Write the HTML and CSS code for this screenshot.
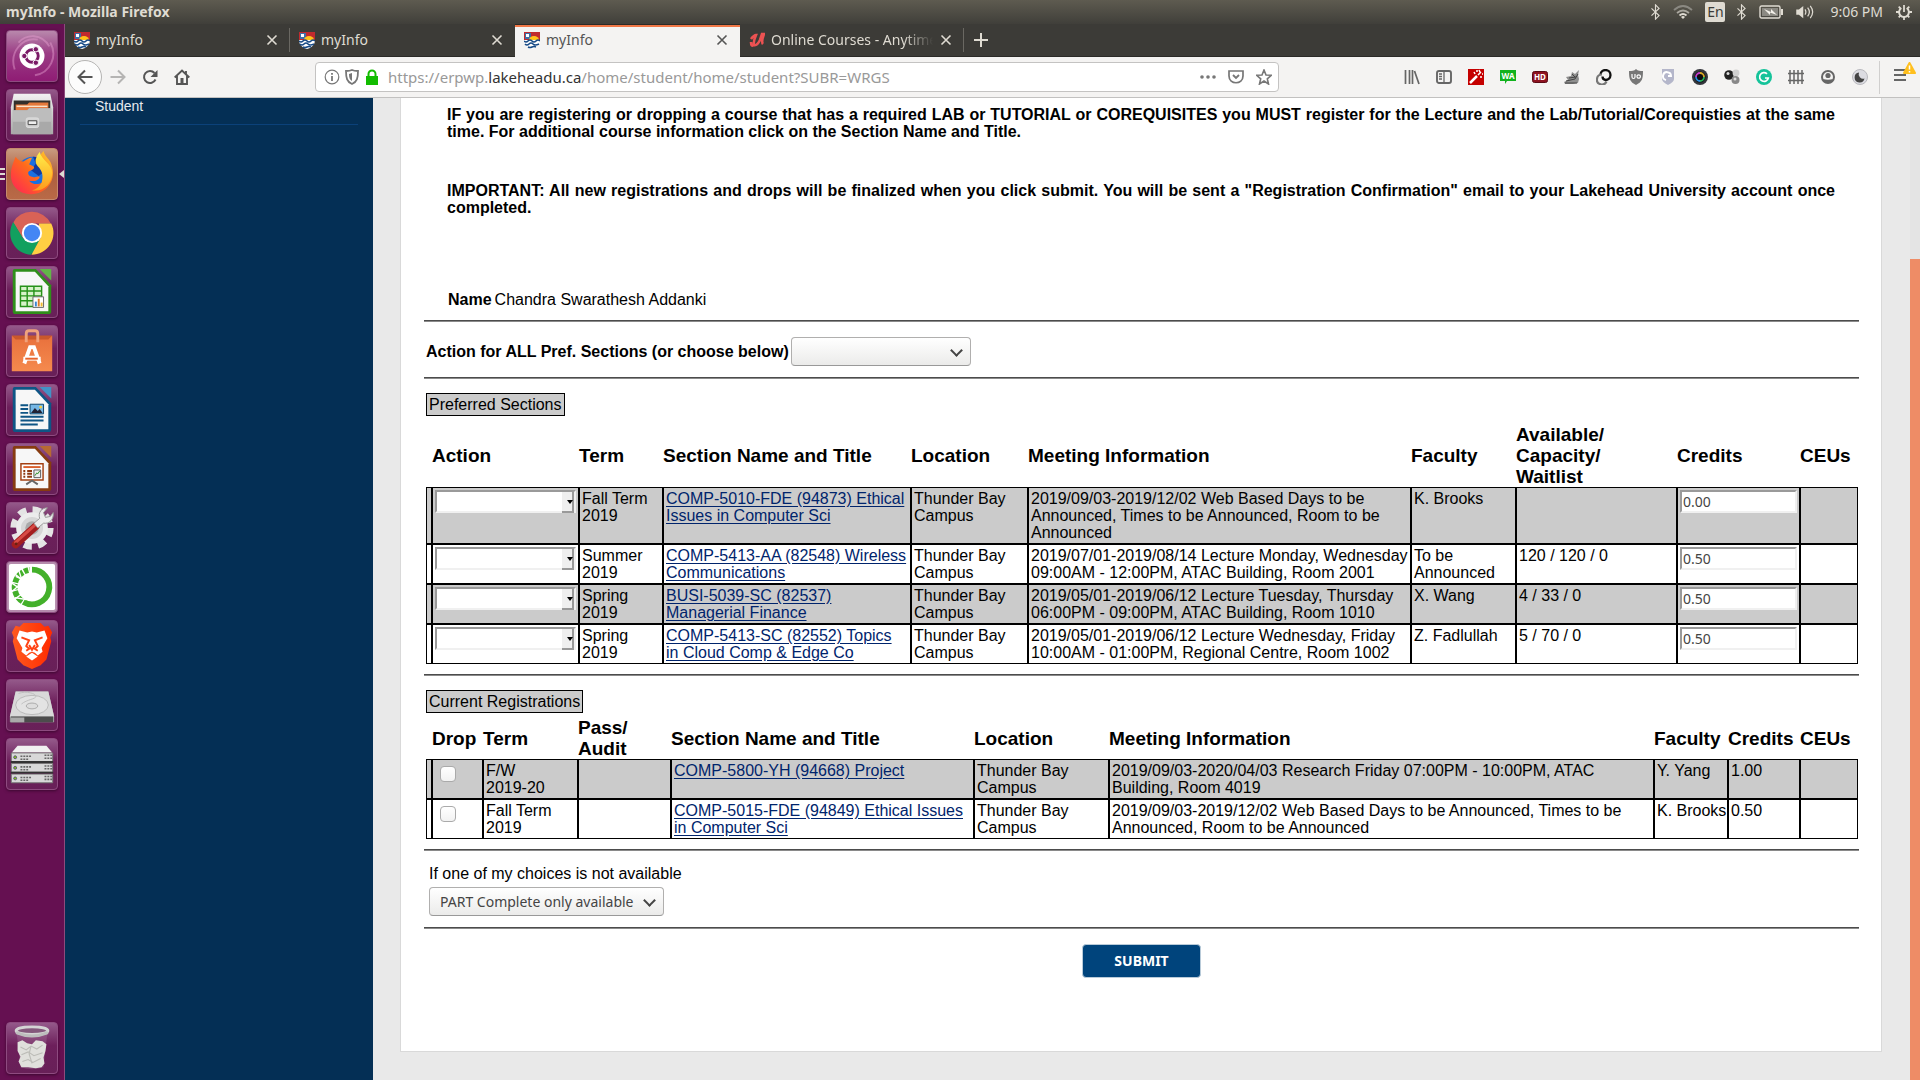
FILE: index.html
```html
<!DOCTYPE html>
<html lang="en">
<head>
<meta charset="utf-8">
<title>myInfo - Mozilla Firefox</title>
<link rel="stylesheet" href="styles.css">
</head>
<body>
<svg class="defs" aria-hidden="true">
  <defs>
    <linearGradient id="flame" x1="0" y1="1" x2="1" y2="0"><stop offset="0" stop-color="#ff1f5a"/><stop offset=".5" stop-color="#ff6a1c"/><stop offset="1" stop-color="#ffd52e"/></linearGradient>
    <linearGradient id="tail" x1="0" y1="0" x2="0" y2="1"><stop offset="0" stop-color="#fff04a"/><stop offset="1" stop-color="#ff9a1c"/></linearGradient>
    <linearGradient id="bag" x1="0" y1="0" x2="0" y2="1"><stop offset="0" stop-color="#e8703c"/><stop offset="1" stop-color="#f58a4e"/></linearGradient>
    <linearGradient id="lion" x1="0" y1="0" x2="1" y2="0"><stop offset="0" stop-color="#ff5a1f"/><stop offset="1" stop-color="#ff2b00"/></linearGradient>
    <linearGradient id="metal" x1="0" y1="0" x2="0" y2="1"><stop offset="0" stop-color="#f2f2f2"/><stop offset="1" stop-color="#a8a8a8"/></linearGradient>
    <symbol id="crest" viewBox="0 0 16 18"><path d="M0 1h16v8H0z" fill="#c02a2e"/><path d="M1 2h6v6H1z" fill="#3d6ea8"/><path d="M2 3h3v3H2z" fill="#fff"/><path d="M5 9a5 4 0 0 1 10 0z" fill="#ffc21a"/><path d="M0 9h16c0 5-4 8-8 9C4 17 0 14 0 9z" fill="#fff"/><path d="M0 10q2 2 4 0t4 0 4 0 4 0M1 13q2 2 4 0t4 0 6 0M4 16q2 1 4 0t4 0" fill="none" stroke="#174a86" stroke-width="1.6"/></symbol>
    <symbol id="cross" viewBox="0 0 12 12"><path d="M1.500 1.500l9 9M10.500 1.500l-9 9" stroke="currentColor" stroke-width="1.600"/></symbol>
    <symbol id="bt" viewBox="0 0 12 18"><path d="M1.500 5l8.500 8-4 4V1l4 4-8.500 8" fill="none" stroke="currentColor" stroke-width="1.300"/></symbol>
  </defs>
</svg>
<header class="panel">
  <span class="panel-title">myInfo - Mozilla Firefox</span>
  <div class="indicators">
    <svg class="ind-bt" viewBox="0 0 12 18"><use href="#bt"/></svg>
    <svg class="ind-wifi" viewBox="0 0 20 14"><g fill="none" stroke="#8b8982" stroke-width="1.800"><path d="M1 5q9-8 18 0"/><path d="M4 8q6-5 12 0" stroke="#aaa79f"/><path d="M6.500 10.500q3.500-3 7 0" stroke="#dfdbd2"/></g><path d="M8 12q2-2 4 0l-2 2z" fill="#dfdbd2"/></svg>
    <span class="lang">En</span>
    <svg class="ind-bt" viewBox="0 0 12 18"><use href="#bt"/></svg>
    <svg class="ind-bat" viewBox="0 0 24 14"><rect x="1" y="1" width="20" height="12" rx="1.500" fill="none" stroke="#dfdbd2" stroke-width="1.400"/><path d="M3 3h16v8H3z" fill="#8b8982"/><path d="M22 4h2v6h-2z" fill="#dfdbd2"/><path d="M5 4l7 3V4l6 6-7-2.500V10z" fill="#f4f1ea"/></svg>
    <svg class="ind-vol" viewBox="0 0 20 16"><path d="M0 5h3l5-4v14l-5-4H0z" fill="#dfdbd2"/><path d="M10 5q2 3 0 6M13 3q4 5 0 10M16 1q5.500 7 0 14" fill="none" stroke="#dfdbd2" stroke-width="1.400"/></svg>
    <time class="clock">9:06 PM</time>
    <svg class="ind-gear" viewBox="0 0 18 18"><path d="M6 4.500a5.500 5.500 0 1 0 6 0" fill="none" stroke="#dfdbd2" stroke-width="2.200"/><path d="M9 1v8M3 3l2 2M15 3l-2 2M0 9h4M14 9h4M3 15l2-2M15 15l-2-2M9 14v4" stroke="#dfdbd2" stroke-width="2"/></svg>
  </div>
</header>
<div class="desktop">
  <nav class="launcher" aria-label="Launcher">
    <button class="tile ubuntu" aria-label="Search"><svg viewBox="0 0 52 52"><path d="M8 40C2 22 16 6 32 9M45 12c8 14 0 32-16 34M12 12c8-9 24-10 32 4" fill="none" stroke="#e6a0d0" stroke-opacity=".45" stroke-width="2"/><circle cx="26" cy="26" r="13" fill="#fff"/><circle cx="26" cy="26" r="6.500" fill="none" stroke="#7a1a66" stroke-width="3"/><g fill="#7a1a66" stroke="#fff" stroke-width="1"><circle cx="18" cy="26" r="2.800"/><circle cx="30" cy="19" r="2.800"/><circle cx="30" cy="33" r="2.800"/></g></svg></button>
    <button class="tile" aria-label="Files"><svg viewBox="0 0 52 52"><path d="M7 4h38l3 14v28H4V18z" fill="url(#metal)"/><path d="M7 11h38v12H7z" fill="#33302c"/><path d="M9 15h12l2-2h20v9H9z" fill="#e5793b"/><path d="M10 17h32" stroke="#fbe3c8" stroke-width="1.500"/><path d="M6 21h15l2-2h23v27H6z" fill="#a9a9a9"/><path d="M6 21h15l2-2h23v14H6z" fill="#bdbdbd"/><rect x="20" y="29" width="13" height="10" rx="2" fill="#d4d4d4" stroke="#dedede"/><path d="M22 32h9v4h-9z" fill="#eee" stroke="#444"/></svg></button>
    <button class="tile active" aria-label="Firefox"><svg viewBox="0 0 52 52"><circle cx="27" cy="25" r="17" fill="#1b6fe0"/><path d="M27 8c9 0 14 6 16 12l-10 8-8-6 5-7z" fill="#123a9e"/><path d="M9 8c2 3 5 5 8 5 3-2 6-4 9-4l-3 7c3 1 6 2 5 4-2 3-6 2-6 5 0 2 2 4 5 4 3 1 5-1 7 0-1 4-7 5-11 4 5 6 15 4 18-4 2-6-3-11-7-15-1-5 1-9 4-12 1 6 8 9 9 17 4 15-7 28-22 28C12 47 4 38 4 27c0-7 2-12 5-19z" fill="url(#flame)"/><path d="M34 3c-4 5-6 10-2 15 5 5 6 10 4 17-2 4-6 7-10 8 12 2 21-7 21-18 0-10-11-13-13-22z" fill="url(#tail)"/></svg></button>
    <button class="tile" aria-label="Chrome"><svg viewBox="0 0 52 52"><path d="M26 4a22 22 0 0 1 19.500 12H26L16 31 6.500 15A22 22 0 0 1 26 4z" fill="#d96256"/><path d="M6.500 14.500L17 32l9 4-1 12.500A22.500 22.500 0 0 1 6.500 14.500z" fill="#12a05f"/><path d="M17 31l9 5 9-5-9 17.500z" fill="#12a05f"/><path d="M35 31L25.500 48.500A22.500 22.500 0 0 0 46 16H33z" fill="#ffce43"/><circle cx="26" cy="26" r="10.500" fill="#fff"/><circle cx="26" cy="26" r="8.500" fill="#4486f4"/></svg></button>
    <button class="tile" aria-label="Calc"><svg viewBox="0 0 52 52"><path d="M6 4q0-2 2-2h22l16 17v27q0 3-3 3H9q-3 0-3-3z" fill="#2f8f1a"/><path d="M9 5h20l14 15v26H9z" fill="#f7f7f7"/><path d="M34 2h12v12z" fill="#62b548"/><path d="M14 20h22v21H14z" fill="#d7f3c9"/><path d="M14 20h22v21H14zM14 25h22M14 30h22M14 35h22M21 20v21M28 20v21" stroke="#269219" stroke-width="1.500" fill="none"/><path d="M27 31h11v11H27z" fill="#fff" stroke="#666"/><path d="M29 36h2v5h-2z" fill="#3a85cf"/><path d="M32 33h2v8h-2z" fill="#dd7b28"/><path d="M35 37h2v4h-2z" fill="#efb931"/></svg></button>
    <button class="tile" aria-label="Ubuntu Software"><svg viewBox="0 0 52 52"><path d="M5 10l4 3h34l4-3v37H5z" fill="url(#bag)"/><path d="M5 10h42l-4 4H9z" fill="#c9582c"/><path d="M20 17V8q0-3 3-3h6q3 0 3 3v9" fill="none" stroke="#f0a27c" stroke-width="3"/><path d="M18 39l6-17h4l6 17M21 33h11" stroke="#fff" stroke-width="4" fill="none"/><path d="M17 32h18v4H17z" fill="#fff"/><path d="M19 34h13" stroke="#e8642c" stroke-width="2"/></svg></button>
    <button class="tile" aria-label="Writer"><svg viewBox="0 0 52 52"><path d="M6 4q0-2 2-2h22l16 17v27q0 3-3 3H9q-3 0-3-3z" fill="#0e5585"/><path d="M9 5h20l14 15v26H9z" fill="#f7f7f7"/><path d="M34 2h12v12z" fill="#4292c6"/><path d="M14 21h8M14 25h8M14 29h8M14 33h24M14 37h24M14 41h18" stroke="#0e5585" stroke-width="2"/><path d="M24 20h14v10H24z" fill="#75b7e5" stroke="#0e4468"/><path d="M25 29l4-5 3 3 2-2 3 4z" fill="#223"/><circle cx="35" cy="23" r="1.500" fill="#f6cf45"/></svg></button>
    <button class="tile" aria-label="Impress"><svg viewBox="0 0 52 52"><path d="M6 4q0-2 2-2h22l16 17v27q0 3-3 3H9q-3 0-3-3z" fill="#873b10"/><path d="M9 5h20l14 15v26H9z" fill="#f7f7f7"/><path d="M34 2h12v12z" fill="#b76a32"/><path d="M14.500 20.500h23v17h-23z" fill="#fff" stroke="#a34012" stroke-width="1.500"/><path d="M17 24h18" stroke="#d9602c" stroke-width="2"/><path d="M17 28h2M17 31h2M17 34h2M21 28h5M21 31h5M21 34h5" stroke="#8c3812" stroke-width="2"/><path d="M28 27h7v8h-7z" fill="#eee" stroke="#555"/><path d="M29 33l2-3 1 1 2-3" fill="none" stroke="#2a8d25"/><path d="M20 42l6-4 6 4" fill="none" stroke="#666" stroke-width="2"/></svg></button>
    <button class="tile" aria-label="System Settings"><svg viewBox="0 0 52 52"><circle cx="26" cy="26" r="18" fill="none" stroke="#e4e4e4" stroke-width="9" stroke-dasharray="8 6.140"/><circle cx="26" cy="26" r="14" fill="#d6d6d6" stroke="#ececec" stroke-width="5"/><circle cx="26" cy="26" r="7" fill="#aaa"/><path d="M9 43l21-19" stroke="#a31e1e" stroke-width="8" stroke-linecap="round"/><path d="M9 41l20-18" stroke="#d84b45" stroke-width="3" stroke-linecap="round"/><path d="M28 21l6-5c-2-6 2-11 8-11l-4 5 2 5 5-1 3-4c1 7-4 12-10 11l-6 5z" fill="#ececec" stroke="#999"/><circle cx="9.500" cy="42.500" r="1.500" fill="#621"/></svg></button>
    <button class="tile plain" aria-label="Anaconda Navigator"><svg viewBox="0 0 52 52"><rect x="2" y="2" width="48" height="48" rx="2" fill="#fff"/><path d="M26 8a18 18 0 1 1-9 33.600" fill="none" stroke="#43b02a" stroke-width="6"/><path d="M16 41A18 18 0 0 1 25 8" fill="none" stroke="#43b02a" stroke-width="6" stroke-dasharray="6 1.500"/><path d="M5 22l12 8M5 31l11-10M9 15l9 4M12 8l4 12M8 37l12 2M22 5l2 8" stroke="#fff" stroke-width="1.400"/></svg></button>
    <button class="tile" aria-label="Brave"><svg viewBox="0 0 52 52"><path d="M17 2h18l4 4 4-1 4 7-2 5 1 4-5 19-6 6-9 4-9-4-6-6-5-19 1-4-2-5 4-7 4 1z" fill="url(#lion)"/><path d="M13 10l8 2 5-1 5 1 8-2 3 8-6 10 1 4-5 4-3-3-3-1-3 1-3 3-5-4 1-4-6-10z" fill="#fff"/><path d="M15 17l8 3-3 6 3 3-3 2M37 17l-8 3 3 6-3 3 3 2M23 25l3 5 3-5" fill="none" stroke="#ff4314" stroke-width="2"/><path d="M20 37l6-4 6 4-6 4z" fill="#fff"/></svg></button>
    <button class="tile" aria-label="Disk"><svg viewBox="0 0 52 52"><path d="M9 12h34l6 26v6H3v-6z" fill="#a9a9a9"/><path d="M9 12h34l6 26H3z" fill="#d9d9d9"/><path d="M4 38h44v6H4z" fill="#4c4c4c"/><path d="M4 39h14v5H4z" fill="#aaa"/><ellipse cx="26" cy="26" rx="17" ry="10" fill="#e3e3e3" stroke="#b9b9b9"/><ellipse cx="26" cy="27" rx="6" ry="3" fill="#ddd" stroke="#aaa"/><path d="M12 14c8-3 18 0 18 3s-9 3-15 8" fill="none" stroke="#c0c0c0"/></svg></button>
    <button class="tile" aria-label="Server"><svg viewBox="0 0 52 52"><path d="M11 7h30l6 7H5z" fill="#f1f1f1"/><g fill="#d8d8d8" stroke="#777"><path d="M4.500 14.500h43v9h-43zM4.500 25.500h43v9h-43zM4.500 36.500h43v9h-43z"/></g><path d="M4 24h44M4 35h44" stroke="#333" stroke-width="2"/><g fill="#8cc81e" stroke="#557"><circle cx="8.500" cy="19" r="1.500"/><circle cx="8.500" cy="30" r="1.500"/><circle cx="8.500" cy="41" r="1.500"/></g><path d="M14 18h12M14 21h8M14 29h12M14 32h8M14 40h12M14 43h8M39 17h8M39 20h8M39 28h8M39 31h8M39 39h8M39 42h8" stroke="#666" stroke-width="1.600" stroke-dasharray="2 1"/></svg></button>
    <button class="tile trash" aria-label="Trash"><svg viewBox="0 0 52 52"><path d="M10 10h32l-4 36q-12 4-24 0z" fill="#fff" fill-opacity=".12"/><path d="M11 20l5-2 5 3 5 1 4-4 7 1 4 3-1 7-2 7 1 6-3 4-6 1-8-1-7 0-3-6 2-5-3-6z" fill="#e0e0dc"/><path d="M14 25l6 3 5-4 6 3 6-4M15 33l7-3 6 4 9-3M16 40l6-2 5 3 8-4M25 24l-2 8 3 10" fill="none" stroke="#bcbcb7" stroke-width="1.200"/><ellipse cx="26" cy="8" rx="16.500" ry="4" fill="#84587c" stroke="#d4d4d4" stroke-width="3"/><path d="M9.500 10q16.500 7 33 0" fill="none" stroke="#bdbdbd" stroke-width="3"/></svg></button>
  </nav>
  <div class="browser">
    <div class="tabs" role="tablist">
      <div class="tab" role="tab"><svg class="fav"><use href="#crest"/></svg><span class="tab-name">myInfo</span><button class="close" aria-label="Close tab"><svg><use href="#cross"/></svg></button></div>
      <div class="tab" role="tab"><svg class="fav"><use href="#crest"/></svg><span class="tab-name">myInfo</span><button class="close" aria-label="Close tab"><svg><use href="#cross"/></svg></button></div>
      <div class="tab current" role="tab" aria-selected="true"><svg class="fav"><use href="#crest"/></svg><span class="tab-name">myInfo</span><button class="close" aria-label="Close tab"><svg><use href="#cross"/></svg></button></div>
      <div class="tab last" role="tab"><svg class="fav" viewBox="0 0 16 18"><path d="M2 8q3-4 5-4-3 7-2 10 3 1 6-5l2-6h2q-3 8-1 10M5 14q-3 2-3-3" fill="none" stroke="#ec5252" stroke-width="2.600"/></svg><span class="tab-name faded">Online Courses - Anytime</span><button class="close" aria-label="Close tab"><svg><use href="#cross"/></svg></button></div>
      <button class="newtab" aria-label="New tab"><svg viewBox="0 0 14 14"><path d="M7 0v14M0 7h14" stroke="currentColor" stroke-width="2"/></svg></button>
    </div>
    <div class="toolbar">
      <div class="navs">
        <button class="back" aria-label="Back"><svg viewBox="0 0 16 16"><path d="M15.500 8H2M8 1.500L1.500 8 8 14.500" fill="none" stroke="#555" stroke-width="2"/></svg></button>
        <button class="nav" aria-label="Forward"><svg viewBox="0 0 16 16"><path d="M.500 8H14M8 1.500L14.500 8 8 14.500" fill="none" stroke="#b5b4b3" stroke-width="2"/></svg></button>
        <button class="nav" aria-label="Reload"><svg viewBox="0 0 16 16"><path d="M13.500 10.500A6 6 0 1 1 12.500 4" fill="none" stroke="#555" stroke-width="2"/><path d="M15.500 1v7h-7z" fill="#555"/></svg></button>
        <button class="nav" aria-label="Home"><svg viewBox="0 0 16 16"><path d="M.700 8.500L8 1.500l7.300 7M3 7v8h10V7M12 2v4" fill="none" stroke="#555" stroke-width="1.900"/><path d="M6.500 9h3v6h-3z" fill="#555"/></svg></button>
      </div>
      <div class="urlbar">
        <svg viewBox="0 0 16 16"><circle cx="8" cy="8" r="6.800" fill="none" stroke="#777" stroke-width="1.200"/><path d="M8 7v5M8 4v1.800" stroke="#777" stroke-width="1.800"/></svg>
        <svg viewBox="0 0 16 16"><path d="M8 1c2 1 4 1 6 1 0 7-1 11-6 13C3 13 2 9 2 2c2 0 4 0 6-1z" fill="none" stroke="#777" stroke-width="1.800"/><path d="M8 4v8c-2-1-3-3-3-7z" fill="#777"/></svg>
        <svg viewBox="0 0 16 16"><path d="M2 7h12v9H2z" fill="#12bc00"/><path d="M4.500 8V5a3.500 3.500 0 0 1 7 0v3" fill="none" stroke="#12bc00" stroke-width="2"/></svg>
        <span class="url">https://erpwp.<b>lakeheadu.ca</b>/home/student/home/student?SUBR=WRGS</span>
        <div class="urlactions">
          <svg viewBox="0 0 16 16" fill="#777"><circle cx="2" cy="8" r="1.800"/><circle cx="8" cy="8" r="1.800"/><circle cx="14" cy="8" r="1.800"/></svg>
          <svg viewBox="0 0 16 16"><path d="M1 2h14v5c0 9-14 9-14 0z" fill="none" stroke="#777" stroke-width="1.700"/><path d="M5 6l3 3 3-3" fill="none" stroke="#777" stroke-width="1.900"/></svg>
          <svg viewBox="0 0 16 16"><path d="M8 1l2 5 5.300.300-4 3.500L12.500 15 8 12l-4.500 3 1.200-5.200-4-3.500L6 6z" fill="none" stroke="#777" stroke-width="1.600"/></svg>
        </div>
      </div>
      <div class="addons">
        <svg viewBox="0 0 16 16"><path d="M1.500 1v14M5.500 1v14M8.500 1v14M10.500 2l4.500 13" stroke="#666" stroke-width="1.700"/></svg>
        <svg viewBox="0 0 16 16"><rect x="1" y="2" width="14" height="12" rx="2" fill="none" stroke="#666" stroke-width="1.900"/><path d="M8 2v12M3 5h3M3 7.500h3M3 10h3" stroke="#666" stroke-width="1.300"/></svg>
        <svg viewBox="0 0 16 16"><path d="M0 0h16v16H0z" fill="#c50000"/><path d="M2 14l7-7" stroke="#fff" stroke-width="2.500"/><path d="M10 6l3-3M6 3l1 2M8 2h2M13 7v2M11 1l1 2M14 5h1" stroke="#fff" stroke-width="1.500"/></svg>
        <svg viewBox="0 0 16 16"><path d="M0 1h16v11H7l-2 3v-3H0z" fill="#11b21e"/><text x="8" y="10" text-anchor="middle" class="badge">WA</text></svg>
        <svg viewBox="0 0 16 16"><rect x=".500" y="2.500" width="15" height="11" rx="2" fill="#8e1220" stroke="#5a0a14"/><text x="8" y="11" text-anchor="middle" class="badge">HD</text></svg>
        <svg viewBox="0 0 16 16"><path d="M0 13l4-2-2-3 5-1 1-4 3 2 4-4-1 5 1 4-1 4-5 1H1z" fill="#8f8f8f"/><path d="M2 12l9-2 3-5M5 9l7-1M8 5l3 3M1 14h12" stroke="#444" stroke-width="1" fill="none"/></svg>
        <svg viewBox="0 0 16 16"><path d="M4.500 5.500A5 5 0 1 1 9.500 11 3.500 3.500 0 0 1 6.500 7.500" fill="none" stroke="#111" stroke-width="2.300"/><path d="M10.500 12.500A5 5 0 1 1 6 5.500" fill="none" stroke="#777" stroke-width="2.200"/></svg>
        <svg viewBox="0 0 16 16"><path d="M8 0c2 2 4 2 7 2 0 8-1 11-7 14C2 13 1 10 1 2c3 0 5 0 7-2z" fill="#777"/><path d="M4 5v3q0 1.500 1.500 1.500T7 8V5M9 7.500a1.700 1.700 0 1 0 3.400 0 1.700 1.700 0 1 0-3.400 0" fill="none" stroke="#fff" stroke-width="1.200"/></svg>
        <svg viewBox="0 0 16 16"><path d="M2 0h12v10q0 3-6 6-6-3-6-6z" fill="#b4b6ca"/><path d="M6 11a4 4 0 1 1 5-4H8" fill="none" stroke="#fff" stroke-width="2"/></svg>
        <svg viewBox="0 0 16 16"><circle cx="8" cy="8" r="8" fill="#34363c"/><circle cx="8" cy="8" r="5.500" fill="#0c0c10"/><g fill="none" stroke-width="1.800"><path d="M8 4a4 4 0 0 1 4 4" stroke="#d7a72a"/><path d="M4 8a4 4 0 0 1 4-4" stroke="#c33ec7"/><path d="M8 12a4 4 0 0 1-4-4" stroke="#278cdf"/><path d="M12 8a4 4 0 0 1-4 4" stroke="#26b05a"/></g></svg>
        <svg viewBox="0 0 16 16"><circle cx="5" cy="6" r="4.800" fill="#222"/><circle cx="4" cy="4.500" r="1.500" fill="#ddd"/><circle cx="12" cy="4" r="3.400" fill="#d0d0d0"/><circle cx="11.500" cy="11" r="4" fill="#888"/><circle cx="11" cy="10" r="1.500" fill="#ddd"/></svg>
        <svg viewBox="0 0 16 16"><circle cx="8" cy="8" r="8" fill="#15c39a"/><path d="M11 4.800A4.400 4.400 0 1 0 12.300 9H9" fill="none" stroke="#fff" stroke-width="1.700"/></svg>
        <svg viewBox="0 0 16 16"><path d="M2 1v14M6 1v14M10 1v14M14 1v14M0 4.500h16M0 11.500h16" stroke="#666" stroke-width="1.500"/></svg>
        <svg viewBox="0 0 16 16"><circle cx="8" cy="8" r="6" fill="none" stroke="#666" stroke-width="2"/><circle cx="8" cy="6.500" r="2.600" fill="#666"/><path d="M3 10q5 1.500 10 0l-2 3.500H5z" fill="#666"/></svg>
        <svg viewBox="0 0 16 16"><circle cx="8" cy="8" r="7.500" fill="#dcdce2" stroke="#b9b9be"/><path d="M7 3.500a5 5 0 1 0 5.500 6A4.500 4.500 0 0 1 7 3.500z" fill="#444"/></svg>
      </div>
      <button class="menu" aria-label="Open menu"><svg viewBox="0 0 24 24"><path d="M1 8h12M1 13h12M1 18h12" stroke="#666" stroke-width="2"/><path d="M16.500 1L22 11H11z" fill="#ffbf1e" stroke="#ffbf1e" stroke-width="2" stroke-linejoin="round"/><path d="M16.500 3.500v4M16.500 9v1.500" stroke="#fff" stroke-width="1.500"/></svg></button>
    </div>
    <div class="view">
      <aside class="side"><a class="side-link" href="#student">Student</a></aside>
      <main class="page">
        <form class="card">
          <div class="notes">
            <p>IF you are registering or dropping a course that has a required LAB or TUTORIAL or COREQUISITES you MUST register for the Lecture and the Lab/Tutorial/Corequisties at the same time. For additional course information click on the Section Name and Title.</p>
            <p>IMPORTANT: All new registrations and drops will be finalized when you click submit. You will be sent a "Registration Confirmation" email to your Lakehead University account once completed.</p>
          </div>
          <p class="student"><b>Name</b><span>Chandra Swarathesh Addanki</span></p>
          <hr>
          <div class="all-row"><label for="all">Action for ALL Pref. Sections (or choose below)</label><span class="drop wide"><select id="all"><option></option></select></span></div>
          <hr>
          <table class="grid preferred">
            <caption><span>Preferred Sections</span></caption>
            <colgroup><col class="w6"><col class="w147"><col class="w84"><col class="w248"><col class="w117"><col><col class="w105"><col class="w161"><col class="w123"><col class="w58"></colgroup>
            <thead><tr><td></td><th>Action</th><th>Term</th><th>Section Name and Title</th><th>Location</th><th>Meeting Information</th><th>Faculty</th><th>Available/<br>Capacity/<br>Waitlist</th><th>Credits</th><th>CEUs</th></tr></thead>
            <tbody>
              <tr><td></td><td><span class="old"><select aria-label="Action for COMP-5010-FDE"><option></option></select></span></td><td>Fall Term 2019</td><td><a href="#s1">COMP-5010-FDE (94873) Ethical Issues in Computer Sci</a></td><td>Thunder Bay Campus</td><td>2019/09/03-2019/12/02 Web Based Days to be Announced, Times to be Announced, Room to be Announced</td><td>K. Brooks</td><td></td><td><input class="credit" aria-label="Credits for COMP-5010-FDE" value="0.00"></td><td></td></tr>
              <tr><td></td><td><span class="old"><select aria-label="Action for COMP-5413-AA"><option></option></select></span></td><td>Summer 2019</td><td><a href="#s2">COMP-5413-AA (82548) Wireless Communications</a></td><td>Thunder Bay Campus</td><td>2019/07/01-2019/08/14 Lecture Monday, Wednesday 09:00AM - 12:00PM, ATAC Building, Room 2001</td><td>To be Announced</td><td>120 / 120 / 0</td><td><input class="credit" aria-label="Credits for COMP-5413-AA" value="0.50"></td><td></td></tr>
              <tr><td></td><td><span class="old"><select aria-label="Action for BUSI-5039-SC"><option></option></select></span></td><td>Spring 2019</td><td><a href="#s3">BUSI-5039-SC (82537) Managerial Finance</a></td><td>Thunder Bay Campus</td><td>2019/05/01-2019/06/12 Lecture Tuesday, Thursday 06:00PM - 09:00PM, ATAC Building, Room 1010</td><td>X. Wang</td><td>4 / 33 / 0</td><td><input class="credit" aria-label="Credits for BUSI-5039-SC" value="0.50"></td><td></td></tr>
              <tr><td></td><td><span class="old"><select aria-label="Action for COMP-5413-SC"><option></option></select></span></td><td>Spring 2019</td><td><a href="#s4">COMP-5413-SC (82552) Topics in Cloud Comp &amp; Edge Co</a></td><td>Thunder Bay Campus</td><td>2019/05/01-2019/06/12 Lecture Wednesday, Friday 10:00AM - 01:00PM, Regional Centre, Room 1002</td><td>Z. Fadlullah</td><td>5 / 70 / 0</td><td><input class="credit" aria-label="Credits for COMP-5413-SC" value="0.50"></td><td></td></tr>
            </tbody>
          </table>
          <hr>
          <table class="grid">
            <caption><span>Current Registrations</span></caption>
            <colgroup><col class="w6"><col class="w51"><col class="w95"><col class="w93"><col class="w303"><col class="w135"><col><col class="w74"><col class="w72"><col class="w58"></colgroup>
            <thead><tr><td></td><th>Drop</th><th>Term</th><th>Pass/<br>Audit</th><th>Section Name and Title</th><th>Location</th><th>Meeting Information</th><th>Faculty</th><th>Credits</th><th>CEUs</th></tr></thead>
            <tbody>
              <tr><td></td><td><input type="checkbox" aria-label="Drop COMP-5800-YH"></td><td>F/W<br>2019-20</td><td></td><td><a href="#s5">COMP-5800-YH (94668) Project</a></td><td>Thunder Bay Campus</td><td>2019/09/03-2020/04/03 Research Friday 07:00PM - 10:00PM, ATAC<br>Building, Room 4019</td><td>Y. Yang</td><td>1.00</td><td></td></tr>
              <tr><td></td><td><input type="checkbox" aria-label="Drop COMP-5015-FDE"></td><td>Fall Term<br>2019</td><td></td><td><a href="#s6">COMP-5015-FDE (94849) Ethical Issues in Computer Sci</a></td><td>Thunder Bay Campus</td><td>2019/09/03-2019/12/02 Web Based Days to be Announced, Times to be<br>Announced, Room to be Announced</td><td class="snug">K. Brooks</td><td>0.50</td><td></td></tr>
            </tbody>
          </table>
          <hr>
          <div class="choice"><label for="choice">If one of my choices is not available</label><span class="drop"><select id="choice"><option>PART Complete only available</option></select></span></div>
          <hr>
          <button type="submit" class="submit">SUBMIT</button>
        </form>
      </main>
      <div class="scroll"><div class="thumb"></div></div>
    </div>
  </div>
</div>
</body>
</html>
```
FILE: styles.css
```css
* { box-sizing: border-box; }
body {
  margin: 0;
  height: 100vh;
  overflow: hidden;
  display: flex;
  flex-direction: column;
  font: 16px/17px "Liberation Sans", Arial, sans-serif;
  color: #000;
}
button { border: 0; padding: 0; background: none; color: inherit; font: inherit; }
svg { display: block; flex: none; }
p { margin: 0; }
.defs { position: absolute; width: 0; height: 0; }

/* desktop panel */
.panel {
  height: 24px;
  flex: none;
  display: flex;
  align-items: center;
  justify-content: space-between;
  padding: 0 8px 0 6px;
  background: linear-gradient(#5e5b50, #403f3a);
  color: #dfdbd2;
  font: 14px/20px "Noto Sans", "Open Sans", sans-serif;
}
.panel-title { font-weight: 700; }
.indicators { display: flex; align-items: center; }
.ind-bt { width: 11px; height: 16px; }
.ind-wifi { width: 20px; height: 14px; margin: 0 12px; }
.lang {
  width: 20px;
  margin-right: 11px;
  background: #dfdbd2;
  border-radius: 2px;
  color: #3c3b37;
  text-align: center;
}
.ind-bat { width: 24px; height: 14px; margin: 0 12px; }
.ind-vol { width: 20px; height: 14px; }
.clock { margin: 0 13px 0 15px; }
.ind-gear { width: 16px; height: 16px; }

.desktop { flex: 1; min-height: 0; display: flex; }

/* launcher */
.launcher {
  width: 65px;
  flex: none;
  display: flex;
  flex-direction: column;
  gap: 7px;
  padding: 6px 6px;
  background: #651051;
  border-right: 1px solid #8d4b7d;
}
.tile {
  position: relative;
  width: 52px;
  height: 52px;
  flex: none;
  border-radius: 4px;
  border: 1px solid #8e4b80;
  background: linear-gradient(#94598a, #6d1f5b 45%, #682058);
  box-shadow: 0 1px 3px #3d0830;
}
.tile svg { width: 50px; height: 50px; }
.ubuntu { background: linear-gradient(#b888ac, #9b3c85 45%, #8f1c74); }
.active { background: linear-gradient(#c89b80, #ae5f3f 50%, #b96a47); border-color: #c58a6c; }
.plain { background: #b58bac; }
.trash { margin-top: auto; }
.active::before {
  content: "";
  position: absolute;
  left: -7px;
  top: 19px;
  width: 5px;
  height: 12px;
  background: repeating-linear-gradient(#dfdbd2 0 2px, transparent 2px 5px);
}
.active::after {
  content: "";
  position: absolute;
  right: -7px;
  top: 21px;
  border: 4px solid transparent;
  border-right: 5px solid #dfdbd2;
  border-left: 0;
}

/* browser chrome */
.browser { flex: 1; min-width: 0; display: flex; flex-direction: column; }
.tabs {
  height: 33px;
  flex: none;
  display: flex;
  background: #3c3b37;
  color: #dfdbd2;
  border-bottom: 1px solid #2b2a27;
}
.tab {
  width: 225px;
  display: flex;
  align-items: center;
  padding: 0 12px 0 9px;
  background: linear-gradient(#6a6862, #6a6862) right center / 1px 24px no-repeat;
  font: 14px/20px "Noto Sans", "Open Sans", sans-serif;
}
.tab:nth-child(2) { background: none; }
.tab.current {
  height: 33px;
  padding-bottom: 1px;
  background: #f4f3f2;
  color: #555;
  box-shadow: inset 0 1px #2b2a27, inset 0 3px #f07746;
}
.tab.last { width: 224px; }
.fav { width: 16px; height: 18px; margin-right: 6px; }
.tab-name { flex: 1; overflow: hidden; white-space: nowrap; }
.faded { mask-image: linear-gradient(90deg, #000 78%, transparent 96%); }
.close { width: 12px; height: 12px; }
.close svg { width: 12px; height: 12px; }
.newtab { width: 34px; display: grid; place-items: center; }
.newtab svg { width: 14px; height: 14px; }
.toolbar {
  height: 41px;
  flex: none;
  display: flex;
  align-items: center;
  padding: 0 3px;
  background: #f4f3f2;
  border-bottom: 1px solid #c2c1c0;
}
.navs { width: 247px; flex: none; display: flex; align-items: center; }
.back {
  width: 34px;
  height: 34px;
  display: grid;
  place-items: center;
  border: 1px solid #b5b4b3;
  border-radius: 50%;
  background: #fcfcfc;
}
.back svg, .nav svg { width: 16px; height: 16px; }
.nav { width: 32px; height: 32px; display: grid; place-items: center; }
.urlbar {
  flex: 1;
  min-width: 0;
  max-width: 964px;
  height: 30px;
  display: flex;
  align-items: center;
  gap: 4px;
  padding: 0 6px 0 8px;
  border: 1px solid #c4c3c2;
  border-radius: 4px;
  background: #fff;
}
.urlbar svg { width: 16px; height: 16px; }
.url {
  flex: 1;
  padding-left: 4px;
  overflow: hidden;
  white-space: nowrap;
  color: #999;
  font: 15px/20px "Noto Sans", "Open Sans", sans-serif;
}
.url b { color: #333; font-weight: 400; }
.urlactions { display: flex; gap: 12px; }
.addons { display: flex; gap: 16px; margin-left: auto; }
.addons svg { width: 16px; height: 16px; }
.badge { font: 700 8px "Noto Sans", sans-serif; fill: #fff; }
.menu { margin-left: 11px; padding-left: 13px; height: 33px; border-left: 1px solid #d0cfce; }
.menu svg { width: 24px; height: 24px; margin-top: -6px; }

/* page */
.view { flex: 1; min-height: 0; display: flex; background: #e9e9e9; }
.side { width: 308px; flex: none; background: #042f55; padding: 0 15px; }
.side-link {
  display: block;
  padding: 0 15px;
  height: 27px;
  border-bottom: 1px solid #0b4179;
  color: #e6eaee;
  font-size: 14px;
  text-decoration: none;
}
.page { flex: 1; min-width: 0; padding: 0 28px 0 27px; }
.card {
  padding: 8px 22px 73px 23px;
  border: 1px solid #d9d9d9;
  border-top: 0;
  background: #fff;
}
.notes {
  display: grid;
  gap: 42px;
  padding: 0 24px 0 23px;
  font-weight: 700;
  text-align: justify;
}
.student { display: flex; gap: 3px; padding: 75px 24px 0; }
hr {
  height: 2px;
  margin: 0;
  border: 0;
  background: linear-gradient(#4c4c4c 50%, #8a8a8a 50%);
}
.student + hr { margin-top: 12px; }
.all-row {
  display: flex;
  align-items: center;
  gap: 2px;
  padding: 15px 2px 11px;
  font-weight: 700;
}
.drop { position: relative; display: inline-block; }
.drop select {
  appearance: none;
  height: 29px;
  width: 100%;
  margin: 0;
  padding: 0 29px 0 10px;
  border: 1px solid #b0afae;
  border-bottom-color: #999;
  border-radius: 4px;
  background: linear-gradient(#fff, #ebebea);
  color: #444;
  font: 14px/20px "Noto Sans", "Open Sans", sans-serif;
}
.drop.wide { width: 180px; }
.drop::after {
  content: "";
  position: absolute;
  right: 10px;
  top: 9px;
  width: 7px;
  height: 7px;
  border: solid #444;
  border-width: 0 2px 2px 0;
  transform: rotate(45deg);
}

.grid {
  width: calc(100% - 3px);
  margin: 14px 1px 10px 2px;
  table-layout: fixed;
  border-collapse: separate;
  border-spacing: 0;
}
.grid caption { text-align: left; padding-bottom: 4px; }
.preferred caption { padding-bottom: 8px; }
.grid caption span {
  display: inline-block;
  padding: 2px;
  border: 1px solid #000;
  background: #cbcbcb;
}
.grid th {
  padding: 0;
  text-align: left;
  font-size: 19px;
  line-height: 21px;
  white-space: nowrap;
}
.grid thead td { padding: 0; }
.grid tbody td {
  padding: 2px;
  border: 1px solid #000;
  vertical-align: top;
}
.grid tbody tr:nth-child(odd) { background: #cbcbcb; }
.grid a { color: #00246c; text-underline-offset: 2px; }
.grid .snug { white-space: nowrap; }
.w6 { width: 6px; } .w51 { width: 51px; } .w58 { width: 58px; } .w72 { width: 72px; }
.w74 { width: 74px; } .w84 { width: 84px; } .w93 { width: 93px; } .w95 { width: 95px; }
.w105 { width: 105px; } .w117 { width: 117px; } .w123 { width: 123px; } .w135 { width: 135px; }
.w147 { width: 147px; } .w161 { width: 161px; } .w248 { width: 248px; } .w303 { width: 303px; }

.old { position: relative; display: block; }
.old select, .credit {
  appearance: none;
  display: block;
  width: 100%;
  height: 23px;
  margin: 0;
  border: 2px solid;
  border-color: #9a9a9a #f0f0f0 #f0f0f0 #9a9a9a;
  border-radius: 0;
  background: #fff;
}
.old::before {
  content: "";
  position: absolute;
  right: 2px;
  top: 2px;
  width: 10px;
  height: 19px;
  border: solid #999;
  border-width: 0 2px 2px 0;
  background: #efefef;
}
.old::after {
  content: "";
  position: absolute;
  right: 3px;
  top: 10px;
  border: 3px solid transparent;
  border-top: 4px solid #000;
  border-bottom: 0;
}
.credit {
  padding: 0 1px;
  color: #444;
  font: 14px/18px "Noto Sans", "Open Sans", sans-serif;
}
.grid input[type="checkbox"] {
  appearance: none;
  display: block;
  width: 16px;
  height: 16px;
  margin: 4px 5px;
  border: 1px solid #aaa;
  border-radius: 4px;
  background: linear-gradient(#fff, #f2f2f2);
}
.choice {
  display: grid;
  justify-items: start;
  gap: 5px;
  padding: 14px 5px 11px;
}
.submit {
  display: block;
  width: 119px;
  height: 34px;
  margin: 15px auto 0;
  border: 1px solid #b9cbd9;
  border-radius: 4px;
  background: #00447c;
  color: #fff;
  font: 700 14px/20px "Noto Sans", "Open Sans", sans-serif;
}
.scroll { width: 10px; flex: none; padding-top: 161px; background: #e4e4e4; }
.thumb { height: 100%; background: #ee8c66; }
```
